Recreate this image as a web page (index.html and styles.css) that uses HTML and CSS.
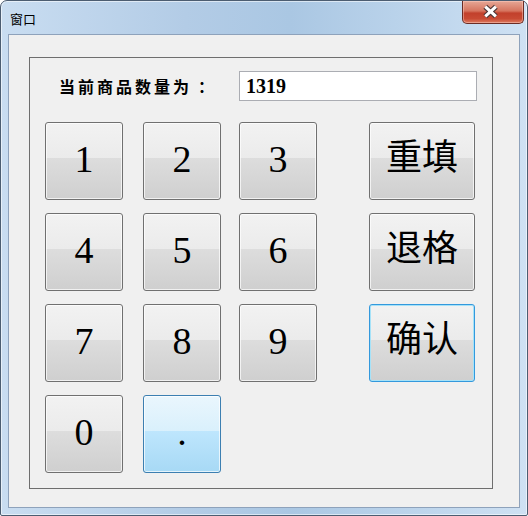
FILE: index.html
```html
<!DOCTYPE html>
<html lang="zh-CN">
<head>
    <meta charset="UTF-8">
    <meta name="viewport" content="width=device-width,initial-scale=1.0">
    <title>窗口</title>
    <link rel="stylesheet" href="styles.css">
</head>
<body>
    <div class="window">
        <div class="titlebar">
            <span class="title">窗口</span>
            <button class="close" aria-label="关闭">
                <svg width="62" height="22" viewBox="0 0 62 22">
                    <path d="M23 5.5 L34 15.5 M34 5.5 L23 15.5" stroke="#4a3535" stroke-width="5.5" fill="none"/>
                    <path d="M23 5.5 L34 15.5 M34 5.5 L23 15.5" stroke="#ffffff" stroke-width="3.2" fill="none"/>
                </svg>
            </button>
        </div>
        <div class="client">
            <div class="group">
                <div class="count-row">
                    <label class="count-label" for="count">当前商品数量为<span class="colon">：</span></label>
                    <input class="count-input" id="count" type="text" value="1319">
                </div>
                <div class="keypad">
                    <button class="key">1</button>
                    <button class="key">2</button>
                    <button class="key">3</button>
                    <button class="key key-wide key-cn">重填</button>
                    <button class="key">4</button>
                    <button class="key">5</button>
                    <button class="key">6</button>
                    <button class="key key-wide key-cn">退格</button>
                    <button class="key">7</button>
                    <button class="key">8</button>
                    <button class="key">9</button>
                    <button class="key key-wide key-cn key-default">确认</button>
                    <button class="key">0</button>
                    <button class="key key-hover">.</button>
                </div>
            </div>
        </div>
    </div>
</body>
</html>
```

FILE: styles.css
```css
body {
    margin: 0;
    background: #ffffff;
}
/* Window frame */
.window {
    box-sizing: border-box;
    width: 528px;
    height: 516px;
    border: 1px solid #4c5d71;
    border-radius: 7px 7px 2px 2px;
    padding: 0 7px 7px 7px;
    background: linear-gradient(90deg, #c9ddf1 0%, #b3cce6 35%, #aac7e3 55%, #bdd5ec 80%, #cfe1f3 100%);
    box-shadow: inset 0 0 0 1px rgba(255,255,255,0.55);
    display: flex;
    flex-direction: column;
}
.titlebar {
    height: 33px;
    display: flex;
    justify-content: space-between;
    align-items: flex-start;
}
.title {
    font-family: "Noto Sans CJK SC", sans-serif;
    font-size: 13px;
    line-height: 13px;
    color: #000;
    margin: 11px 0 0 2px;
}
.close {
    width: 62px;
    height: 23px;
    padding: 0;
    margin: 0 -4px 0 0;
    border: 1px solid #6b2c24;
    border-top: none;
    border-radius: 0 0 5px 5px;
    background: linear-gradient(#e6a796 0%, #d6755f 45%, #c2402c 55%, #c84a33 80%, #dd7a5f 100%);
    box-shadow: inset 0 0 0 1px rgba(255,210,200,0.45);
    display: flex;
    align-items: center;
    justify-content: center;
}
.close svg {
    display: block;
}
/* Client area */
.client {
    flex: 1;
    border: 1px solid #8ea2bb;
    background: #f0f0f0;
    padding: 22px 26px 0 20px;
}
.group {
    box-sizing: border-box;
    height: 432px;
    border: 1px solid #6e6e6e;
    padding: 13px 0 0 15px;
}
.count-row {
    display: flex;
    align-items: center;
    height: 30px;
}
.count-label {
    width: 180px;
    padding-left: 14px;
    font-family: "Noto Sans CJK SC", sans-serif;
    font-weight: bold;
    font-size: 16px;
    letter-spacing: 3px;
    color: #000;
}
.colon {
    margin-left: 6px;
}
.count-input {
    box-sizing: border-box;
    width: 238px;
    height: 30px;
    margin: 0;
    border: 1px solid #abadb3;
    background: #fff;
    padding: 0 5px 0 6px;
    font-family: "Liberation Serif", serif;
    font-weight: bold;
    font-size: 20px;
    color: #000;
    outline: none;
}
/* Keypad buttons */
.keypad {
    margin-top: 21px;
    display: grid;
    grid-template-columns: 98px 96px 130px 106px;
    grid-auto-rows: 78px;
    row-gap: 13px;
}
.key {
    width: 78px;
    height: 78px;
    margin: 0;
    padding: 0 0 4px 0;
    border: 1px solid #707070;
    border-radius: 3px;
    background: linear-gradient(#f2f2f2 0%, #ebebeb 46%, #dddddd 46%, #cfcfcf 100%);
    box-shadow: inset 0 0 0 1px rgba(255,255,255,0.7);
    font-family: "Liberation Serif", serif;
    font-size: 38px;
    color: #000;
    display: flex;
    align-items: center;
    justify-content: center;
}
.key-wide {
    width: 106px;
}
.key-cn {
    font-family: "Noto Sans CJK SC", sans-serif;
    font-size: 36px;
    padding-bottom: 14px;
}
.key-default {
    border-color: #3399dd;
    box-shadow: inset 0 0 0 1px #a6e2f8;
}
.key-hover {
    border-color: #3c7fb1;
    background: linear-gradient(#eaf6fd 0%, #d9f0fc 46%, #bee6fd 46%, #a7d9f5 100%);
}
```
